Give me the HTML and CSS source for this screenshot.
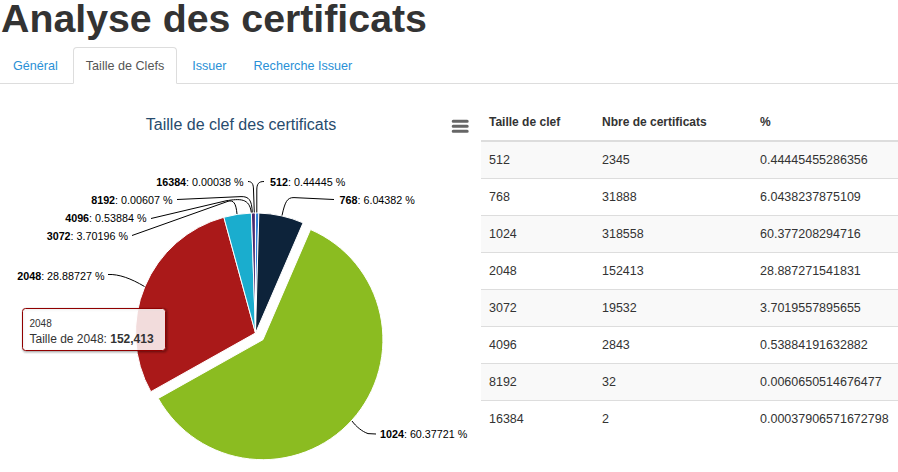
FILE: index.html
```html
<!DOCTYPE html>
<html lang="fr">
<head>
<meta charset="utf-8">
<title>Analyse des certificats</title>
<link rel="stylesheet" href="styles.css">
</head>
<body>
<h1 class="page-title">Analyse des certificats</h1>
<ul class="tabs">
  <li class="tab"><a href="#general">Général</a></li>
  <li class="tab active"><a href="#taille">Taille de Clefs</a></li>
  <li class="tab"><a href="#issuer">Issuer</a></li>
  <li class="tab"><a href="#recherche">Recherche Issuer</a></li>
</ul>
<div class="tab-content">
  <div class="chart-col">
    <svg class="chart" width="481" height="388" viewBox="0 84 481 388" xmlns="http://www.w3.org/2000/svg">
      <text class="chart-title" x="241" y="130" text-anchor="middle">Taille de clef des certificats</text>
      <path class="menu-icon" d="M453.2 121.3H467.2M453.2 126.3H467.2M453.2 131.3H467.2"/>
      <g class="slices">
        <path fill="#2f7ed8" d="M255.5 333L255.5 213A120 120 0 0 1 258.85 213.05Z"/>
        <path fill="#0d233a" d="M255.5 333L258.85 213.05A120 120 0 0 1 303.08 222.83Z"/>
        <path fill="#8bbc21" d="M262.93 339.7L310.51 229.53A120 120 0 1 1 158.26 398.4Z"/>
        <path fill="#aa1919" d="M255.5 333L150.83 391.7A120 120 0 0 1 223.85 217.25Z"/>
        <path fill="#1aadce" d="M255.5 333L223.85 217.25A120 120 0 0 1 251.39 213.07Z"/>
        <path fill="#492970" d="M255.5 333L251.39 213.07A120 120 0 0 1 255.45 213Z"/>
        <path fill="#f28f43" d="M255.5 333L255.45 213A120 120 0 0 1 255.49 213Z"/>
        <path fill="#77a1e5" d="M255.5 333L255.49 213A120 120 0 0 1 255.5 213Z"/>
      </g>
      <g class="connectors">
        <path d="M248 181.5C252 181.5 253.5 184 253.5 190L254.3 212.5"/>
        <path d="M264 181.5C258.5 181.5 256.8 184 256.8 190L256.8 212.5"/>
        <path d="M177 199.5L241 196.6C249 196.4 251.8 200 252.3 212.5"/>
        <path d="M151 218.5L226 200.8C240 198.6 249.5 198 251.3 212.5"/>
        <path d="M132 235.5L228 201.3C233.5 199.8 236 203 237 214"/>
        <path d="M334 199.5L294 197.6C287 197.4 285 202 282 215.5"/>
        <path d="M108 274.5C119 274 131 278.5 144.5 286.5"/>
        <path d="M376 434L368 433.6C362 431.5 356 426.5 352 421"/>
      </g>
      <g class="data-labels">
        <text x="243.5" y="186" text-anchor="end"><tspan class="lbl-key">16384</tspan>: 0.00038 %</text>
        <text x="270" y="186"><tspan class="lbl-key">512</tspan>: 0.44445 %</text>
        <text x="172.5" y="204" text-anchor="end"><tspan class="lbl-key">8192</tspan>: 0.00607 %</text>
        <text x="339.5" y="204"><tspan class="lbl-key">768</tspan>: 6.04382 %</text>
        <text x="146.5" y="222" text-anchor="end"><tspan class="lbl-key">4096</tspan>: 0.53884 %</text>
        <text x="128" y="240" text-anchor="end"><tspan class="lbl-key">3072</tspan>: 3.70196 %</text>
        <text x="104.5" y="279.5" text-anchor="end"><tspan class="lbl-key">2048</tspan>: 28.88727 %</text>
        <text x="380" y="438"><tspan class="lbl-key">1024</tspan>: 60.37721 %</text>
      </g>
      <g class="tooltip">
        <rect class="tt-shadow tt-s1" x="23.5" y="309.5" width="143" height="42" rx="3"/>
        <rect class="tt-shadow tt-s2" x="23.5" y="309.5" width="143" height="42" rx="3"/>
        <rect class="tt-shadow tt-s3" x="23.5" y="309.5" width="143" height="42" rx="3"/>
        <rect class="tt-box" x="22.5" y="308.5" width="143" height="42" rx="3"/>
        <text class="tt-head" x="29.5" y="327">2048</text>
        <text class="tt-body" x="29.5" y="343">Taille de 2048: <tspan class="tt-value">152,413</tspan></text>
      </g>
    </svg>
  </div>
  <div class="table-col">
    <table class="data-table">
      <colgroup>
        <col class="col-key">
        <col class="col-count">
        <col class="col-pct">
      </colgroup>
      <thead>
        <tr><th>Taille de clef</th><th>Nbre de certificats</th><th>%</th></tr>
      </thead>
      <tbody>
        <tr><td>512</td><td>2345</td><td>0.44445455286356</td></tr>
        <tr><td>768</td><td>31888</td><td>6.0438237875109</td></tr>
        <tr><td>1024</td><td>318558</td><td>60.377208294716</td></tr>
        <tr><td>2048</td><td>152413</td><td>28.887271541831</td></tr>
        <tr><td>3072</td><td>19532</td><td>3.7019557895655</td></tr>
        <tr><td>4096</td><td>2843</td><td>0.53884191632882</td></tr>
        <tr><td>8192</td><td>32</td><td>0.0060650514676477</td></tr>
        <tr><td>16384</td><td>2</td><td>0.00037906571672798</td></tr>
      </tbody>
    </table>
  </div>
</div>
</body>
</html>
```

FILE: styles.css
```css
html, body {
  margin: 0;
  padding: 0;
  overflow: hidden;
}

body {
  width: 898px;
  height: 472px;
  background: #fff;
  color: #333;
  font-family: "Liberation Sans", Arial, sans-serif;
}

.page-title {
  margin: 0 0 11px 0;
  padding-left: 1px;
  font-size: 39.3px;
  line-height: 36px;
  font-weight: bold;
  color: #333;
}

.tabs {
  display: flex;
  list-style: none;
  margin: 0;
  padding: 0;
  border-bottom: 1px solid #ddd;
}

.tab {
  margin: 0 2px -1px 0;
}

.tab a {
  display: block;
  padding: 10px 12px 8px 12px;
  font-size: 12.6px;
  line-height: 17px;
  color: #2a90d6;
  text-decoration: none;
  border: 1px solid transparent;
  border-radius: 4px 4px 0 0;
}

.tab:last-child a {
  padding-right: 13px;
  padding-left: 11px;
}

.tab.active a {
  color: #555;
  background: #fff;
  border-color: #ddd #ddd transparent #ddd;
}

.tab-content {
  display: flex;
}

.chart-col {
  width: 481px;
  flex: none;
}

.chart {
  display: block;
  overflow: visible;
  font-family: "Liberation Sans", Arial, sans-serif;
}

.chart-title {
  font-size: 16px;
  fill: #274b6d;
}

.menu-icon {
  fill: none;
  stroke: #666;
  stroke-width: 3;
  stroke-linecap: round;
}

.slices path {
  stroke: #fff;
  stroke-width: 1;
  stroke-linejoin: round;
}

.connectors path {
  fill: none;
  stroke: #000;
  stroke-width: 1;
}

.data-labels text {
  font-size: 10.75px;
  fill: #000;
}

.lbl-key {
  font-weight: bold;
}

.tt-shadow {
  fill: none;
  stroke: #000;
}

.tt-s1 {
  stroke-width: 5;
  stroke-opacity: 0.05;
}

.tt-s2 {
  stroke-width: 3;
  stroke-opacity: 0.1;
}

.tt-s3 {
  stroke-width: 1;
  stroke-opacity: 0.15;
}

.tt-box {
  fill: rgba(255, 255, 255, 0.85);
  stroke: #910000;
  stroke-width: 1;
}

.tt-head {
  font-size: 10px;
  fill: #333;
}

.tt-body {
  font-size: 12px;
  fill: #333;
}

.tt-value {
  font-weight: bold;
}

.table-col {
  flex: 1;
  padding-top: 20px;
}

.data-table {
  width: 417px;
  table-layout: fixed;
  border-collapse: separate;
  border-spacing: 0;
  font-size: 12.5px;
  line-height: 20px;
  color: #333;
}

.col-key { width: 113px; }
.col-count { width: 158px; }
.col-pct { width: 146px; }

.data-table th,
.data-table td {
  padding: 8px;
  text-align: left;
  vertical-align: top;
  white-space: nowrap;
}

.data-table th {
  font-size: 12px;
  font-weight: bold;
  border-bottom: 2px solid #ddd;
}

.data-table td {
  border-top: 1px solid #ddd;
}

.data-table tbody tr:first-child td {
  border-top: 0;
}

.data-table tbody tr:nth-child(odd) td {
  background: #f9f9f9;
}
```
